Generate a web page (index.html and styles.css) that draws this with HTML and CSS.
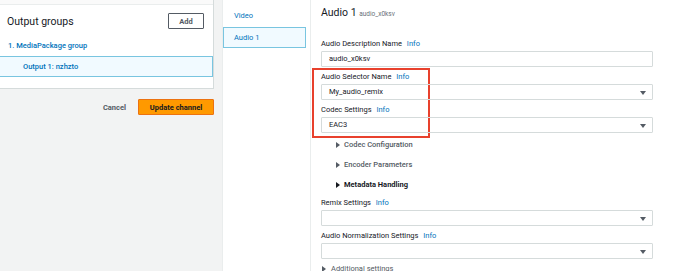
FILE: index.html
```html
<!DOCTYPE html>
<html lang="en">
<head>
    <meta charset="UTF-8">
    <title>Update channel - Audio 1</title>
    <link rel="stylesheet" href="styles.css">
</head>
<body>
    <div class="pagina">
        <!-- Panel izquierdo: grupos de salida -->
        <div class="lateral">
            <div class="tarjeta">
                <div class="tarjeta-tope"></div>
                <div class="tarjeta-cabecera">
                    <h2>Output groups</h2>
                    <button class="boton-add">Add</button>
                </div>
                <a class="grupo">1. MediaPackage group</a>
                <div class="salida">Output 1: nzhzto</div>
            </div>
            <div class="acciones">
                <button class="boton-cancelar">Cancel</button>
                <button class="boton-update">Update channel</button>
            </div>
        </div>

        <!-- Pestañas de streams -->
        <div class="pestanas">
            <div class="pestana">Video</div>
            <div class="pestana activa">Audio 1</div>
        </div>

        <!-- Formulario de audio -->
        <div class="principal">
            <h1>Audio 1 <span class="sub">audio_x0ksv</span></h1>

            <div class="campo">
                <label>Audio Description Name <span class="info">Info</span></label>
                <div class="entrada">audio_x0ksv</div>
            </div>

            <div class="resaltado">
                <div class="campo">
                    <label>Audio Selector Name <span class="info">Info</span></label>
                    <div class="entrada select">My_audio_remix</div>
                </div>
                <div class="campo">
                    <label>Codec Settings <span class="info">Info</span></label>
                    <div class="entrada select">EAC3</div>
                </div>
            </div>

            <div class="expansores">
                <div class="expansor">Codec Configuration</div>
                <div class="expansor">Encoder Parameters</div>
                <div class="expansor oscuro">Metadata Handling</div>
            </div>

            <div class="campo">
                <label>Remix Settings <span class="info">Info</span></label>
                <div class="entrada select"></div>
            </div>
            <div class="campo">
                <label>Audio Normalization Settings <span class="info">Info</span></label>
                <div class="entrada select"></div>
            </div>

            <div class="expansor adicional">Additional settings</div>
        </div>
    </div>
</body>
</html>
```

FILE: styles.css
```css
/* Estilo general */
body {
    margin: 0;
    font-family: Roboto, Arial, sans-serif;
    color: #16191f;
    background-color: #fff;
    overflow: hidden;
}

.pagina {
    display: flex;
    width: 675px;
    height: 271px;
    overflow: hidden;
}

/* Panel izquierdo */
.lateral {
    width: 222px;
    flex-shrink: 0;
    background-color: #f2f3f3;
}

.tarjeta {
    width: 214px;
    height: 89px;
    background-color: #fff;
    border-right: 1px solid #d5dbdb;
    border-bottom: 1px solid #d5dbdb;
    box-sizing: border-box;
}

.tarjeta-tope {
    height: 4px;
    border-bottom: 1px solid #eaeded;
    background-color: #fafafa;
}

.tarjeta-cabecera {
    display: flex;
    justify-content: space-between;
    align-items: center;
    padding: 8px 9px 0 7px;
}

.tarjeta-cabecera h2 {
    margin: 0;
    font-size: 10.5px;
    font-weight: 400;
    color: #16191f;
}

.boton-add {
    width: 36px;
    height: 16px;
    padding: 0;
    font-family: inherit;
    font-size: 7.5px;
    font-weight: 700;
    color: #545b64;
    background-color: #fff;
    border: 1px solid #545b64;
    border-radius: 1px;
}

.grupo {
    display: block;
    margin: 12px 0 0 8px;
    font-size: 7.5px;
    font-weight: 500;
    color: #0073bb;
}

.salida {
    height: 21px;
    margin-top: 6px;
    padding-left: 23px;
    font-size: 7.5px;
    font-weight: 500;
    line-height: 19px;
    color: #0073bb;
    background-color: #f1faff;
    border: 1px solid #79c5e0;
    border-left: none;
    box-sizing: border-box;
}

.acciones {
    display: flex;
    justify-content: flex-end;
    align-items: center;
    gap: 12px;
    width: 214px;
    margin-top: 10px;
}

.boton-cancelar {
    padding: 0;
    font-family: inherit;
    font-size: 7.5px;
    font-weight: 700;
    color: #545b64;
    background: none;
    border: none;
}

.boton-update {
    width: 76px;
    height: 16px;
    padding: 0;
    font-family: inherit;
    font-size: 7.5px;
    font-weight: 700;
    color: #16191f;
    background-color: #ff9900;
    border: 1px solid #ec7211;
    border-radius: 1px;
}

/* Pestañas */
.pestanas {
    width: 89px;
    flex-shrink: 0;
    padding-top: 7px;
    border-left: 1px solid #eaeded;
    border-right: 1px solid #eaeded;
    box-sizing: border-box;
}

.pestana {
    height: 20px;
    padding-left: 11px;
    font-size: 7.5px;
    line-height: 18px;
    color: #0073bb;
    box-sizing: border-box;
}

.pestana.activa {
    margin: 0 4px 0 0;
    padding-left: 10px;
    line-height: 19px;
    height: 21px;
    background-color: #f1faff;
    border: 1px solid #79c5e0;
}

/* Formulario principal */
.principal {
    flex: 1;
    padding: 6px 0 0 10px;
}

h1 {
    margin: 0 0 18px;
    font-size: 10.5px;
    font-weight: 400;
    line-height: 14px;
    color: #16191f;
}

h1 .sub {
    font-size: 6.5px;
    color: #687078;
}

.campo {
    width: 332px;
    margin-bottom: 5px;
}

.campo label {
    display: block;
    margin-bottom: 2px;
    font-size: 7.5px;
    line-height: 10px;
    color: #16191f;
}

.info {
    margin-left: 3px;
    color: #0073bb;
}

.entrada {
    position: relative;
    height: 16px;
    padding-left: 7px;
    font-size: 7.5px;
    line-height: 14px;
    color: #16191f;
    border: 1px solid #d5dbdb;
    border-radius: 1px;
    box-sizing: border-box;
}

.entrada.select::after {
    content: "";
    position: absolute;
    right: 6px;
    top: 6px;
    border-left: 3px solid transparent;
    border-right: 3px solid transparent;
    border-top: 4px solid #545b64;
}

/* Recuadro rojo */
.resaltado {
    width: 118px;
    margin: -4px 0 0 -9px;
    padding: 2px 0 3px 7px;
    border: 2px solid #e8412d;
    box-sizing: border-box;
}

.resaltado .campo:last-child {
    margin-bottom: 0;
}

/* Secciones plegables */
.expansores {
    display: flex;
    flex-direction: column;
    gap: 6px;
    padding-left: 15px;
    margin-bottom: 6px;
}

.expansor {
    position: relative;
    height: 14px;
    padding-left: 8px;
    font-size: 7.5px;
    font-weight: 500;
    line-height: 14px;
    color: #545b64;
}

.expansor::before {
    content: "";
    position: absolute;
    left: 0;
    top: 4px;
    border-top: 3px solid transparent;
    border-bottom: 3px solid transparent;
    border-left: 4px solid #545b64;
}

.expansor.oscuro {
    color: #16191f;
    font-weight: 700;
}

.expansor.oscuro::before {
    border-left-color: #16191f;
}

.adicional {
    height: 10px;
    margin-left: 1px;
    padding-left: 9px;
    font-weight: 400;
    line-height: 10px;
    color: #545b64;
}

.adicional::before {
    top: 2px;
}
```
